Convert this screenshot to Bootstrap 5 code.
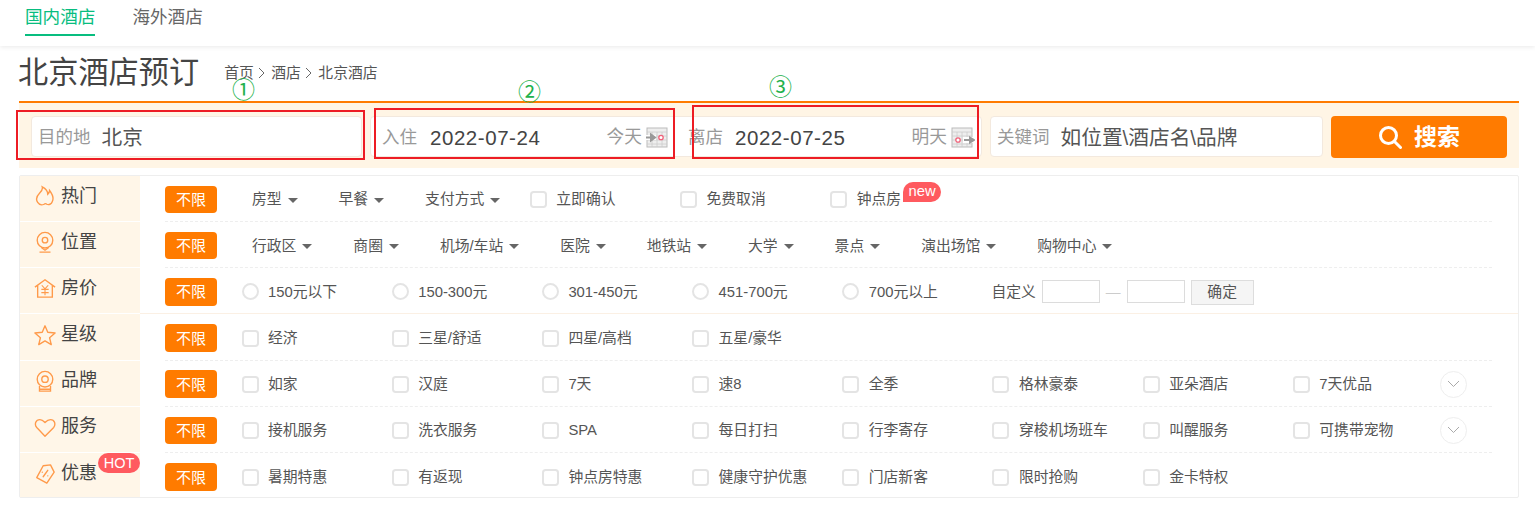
<!DOCTYPE html>
<html lang="zh-CN">
<head>
<meta charset="utf-8">
<title>北京酒店预订</title>
<link href="https://cdn.jsdelivr.net/npm/bootstrap@5.3.0/dist/css/bootstrap.min.css" rel="stylesheet">
<style>
html,body{height:524px;overflow:hidden}
body{position:relative;margin:0;background:#fff;color:#555;font-family:"Liberation Sans","Noto Sans CJK SC",sans-serif;font-size:14.8px}
.topbar{height:46px;box-shadow:0 1px 5px rgba(0,0,0,.09);padding-left:25px;gap:37px}
.tabitem{font-size:17.6px;height:36px;line-height:35px;color:#666;text-decoration:none}
.tabitem.on{color:#08bd7f;border-bottom:2px solid #08bd7f}
.wrapbox{margin:0 16px 0 19px}
.headrow{height:57px;border-bottom:2px solid #ff7b00;align-items:flex-start}
.headrow h1{font-size:30.2px;font-weight:400;color:#444;margin:10px 0 0 -1px;line-height:34px}
.crumbs{margin:16px 0 0 25px;color:#555;font-size:14.8px;line-height:22px;gap:4px}
.crumbs svg{margin:0 2.500px 0 0}
.searchbar{height:65px;background:#fff5e5;padding:13px 12px 10px 12px;gap:8px}
.fieldbox{height:41px;background:#fff;border:1px solid #f3e9de;border-radius:4px;padding:1px 6px 0;flex:none}
.f1{width:331px}.f4{width:333px}
.dategroup{width:612px;padding:1px 0 0}
.datecell{width:305px;height:100%;padding-left:11px}
.datecell.first{padding-right:8px}
.datecell.second{padding-right:6px;padding-left:12px}
.flabel{font-size:17.5px;color:#999;margin-right:11px;white-space:nowrap}
.fval{font-size:20.7px;color:#555;margin-top:2px}
.fdate{font-size:20.5px;color:#444;letter-spacing:.55px;margin-top:2px;margin-left:2px}
.second .fdate{margin-left:1px}
.fhint{font-size:17.7px;color:#999;margin-left:auto;margin-right:4px}
.gobtn{width:177px;height:42px;background:#ff7b00;border:0;border-radius:4px;color:#fff;font-size:23px;font-weight:700;gap:12px;padding:0}
.gobtn:hover{background:#ff7b00;color:#fff}
.panelbox{margin-top:7px;border:1px solid #eee;border-radius:2px;height:323px}
.sidecol{width:120px;flex:none;background:#fff6e8}
.sideitem{height:46.17px;border-bottom:1px solid #fff;font-size:18px;color:#444;padding-left:14px;gap:5px;position:relative;padding-bottom:5px}
.sideitem:last-child{border-bottom:0}
.sideitem svg{width:22px;height:22px;flex:none}
.hotmark{position:absolute;right:0;top:0;height:20px;width:42px;background:#ff5a5f;border-radius:10px;color:#fff;font-size:14.5px;font-weight:400;line-height:20px;padding:0;text-align:center}
.mainfill{flex:1;min-width:0}
.filterrow{height:46.17px;padding-left:25px}
.filterrow.warm{border-bottom:1px solid #fbf0e4}
.filterinner{height:100%;margin-right:26px;border-bottom:1px dashed #eee;padding-top:2px}
.warm .filterinner{border-bottom:0}
.filterrow:last-child .filterinner{border-bottom:0}
.anybtn{width:52px;height:27.5px;background:#ff7b00;border:0;border-radius:4px;color:#fff;font-size:15px;padding:0;line-height:27px;flex:none}
.anybtn:hover{background:#ff7b00;color:#fff}
.droplist{margin-left:35px;gap:40.95px;white-space:nowrap}
.dropname.dropdown-toggle::after{margin-left:6px;border-top:.36em solid #666;border-right:.36em solid transparent;border-left:.36em solid transparent;border-bottom:0;vertical-align:.13em}
.pick{width:150.2px;flex:none;white-space:nowrap;gap:9.5px;margin:0}
.pickset{margin-left:24.5px;flex:none}
.pickset .pick:last-child{width:auto}
.pickset.after-drop{margin-left:29.5px}
.pick input{width:17px;height:17px;margin:0;border:2px solid #e4e4e4;border-radius:1px;flex:none;background-color:#fff}
.pick input[type=radio]{border-radius:50%}
.newmark{position:absolute;left:46.500px;top:-6px;width:38px;height:20px;background:#ff5a5f;border-radius:10px 10px 10px 0;color:#fff;font-size:14.8px;font-weight:400;line-height:19px;padding:0;text-align:center}
.labelwrap{position:relative}
.customset{margin-left:-1px;gap:6px;white-space:nowrap}
.numbox{width:58px;height:23px;min-height:0;border:1px solid #dcdcdc;border-radius:0;padding:0 4px}
.okbtn{width:63px;height:25px;padding:0;border:1px solid #ddd;border-radius:0;background:#f5f5f5;color:#555;font-size:14.8px;line-height:23px;margin-top:2px}
.rangebar{color:#ccc}
.morecircle{width:27px;height:27px;border:1px solid #eee;border-radius:50%;margin-left:auto;margin-right:25px;flex:none}
.redframe{position:absolute;border:2px solid #ed1c24;pointer-events:none}
.r1{left:16px;top:110px;width:349px;height:50px}
.r2{left:374px;top:108px;width:301px;height:51px}
.r3{left:692px;top:105px;width:287px;height:54px}
.circmark{position:absolute;color:#22b14c;font-size:23px;line-height:24px;font-family:"Noto Sans CJK SC",sans-serif}
.c1{left:232px;top:76px}.c2{left:518px;top:78px}.c3{left:769px;top:73px}
</style>
</head>
<body>
<nav class="topbar d-flex align-items-start">
  <a class="tabitem on" href="#">国内酒店</a>
  <a class="tabitem" href="#">海外酒店</a>
</nav>
<div class="wrapbox">
  <div class="headrow d-flex">
    <h1>北京酒店预订</h1>
    <div class="crumbs d-flex align-items-center">
      <span>首页</span><svg width="7" height="12" viewBox="0 0 7 12"><path d="M1 1l5 5-5 5" fill="none" stroke="#666" stroke-width="1"/></svg>
      <span>酒店</span><svg width="7" height="12" viewBox="0 0 7 12"><path d="M1 1l5 5-5 5" fill="none" stroke="#666" stroke-width="1"/></svg>
      <span>北京酒店</span>
    </div>
  </div>
  <form class="searchbar d-flex align-items-start">
    <div class="fieldbox f1 d-flex align-items-center"><span class="flabel">目的地</span><span class="fval">北京</span></div>
    <div class="fieldbox dategroup d-flex">
      <div class="datecell first d-flex align-items-center"><span class="flabel">入住</span><span class="fdate">2022-07-24</span><span class="fhint">今天</span>
        <svg width="22" height="21" viewBox="0 0 22 21"><rect x="1" y="1" width="20" height="19" fill="#eee" stroke="#bbb"/><path d="M1 5h20M1 9h20M1 13h20M1 17h20M6 5v15M11 5v15M16 5v15" stroke="#ccc" stroke-width=".8"/><rect x="0" y="8" width="10" height="5" fill="#fff"/><path d="M0 10.500h8M5 7.500l4 3-4 3z" stroke="#999" stroke-width="2" fill="#999"/><circle cx="15" cy="10.500" r="2.200" fill="#fff" stroke="#f0627a" stroke-width="1.300"/></svg>
      </div>
      <div class="datecell second d-flex align-items-center"><span class="flabel">离店</span><span class="fdate">2022-07-25</span><span class="fhint">明天</span>
        <svg width="24" height="21" viewBox="0 0 24 21"><rect x="1" y="1" width="20" height="19" fill="#eee" stroke="#bbb"/><path d="M1 5h20M1 9h20M1 13h20M1 17h20M6 5v15M11 5v15M16 5v15" stroke="#ccc" stroke-width=".8"/><rect x="12" y="10" width="12" height="6" fill="#fff"/><path d="M13 13h7M19 10.500l4 2.500-4 2.500z" stroke="#999" stroke-width="2" fill="#999"/><circle cx="7" cy="13" r="2.200" fill="#fff" stroke="#f0627a" stroke-width="1.300"/></svg>
      </div>
    </div>
    <div class="fieldbox f4 d-flex align-items-center"><span class="flabel">关键词</span><span class="fval">如位置\酒店名\品牌</span></div>
    <button type="button" class="btn gobtn d-flex align-items-center justify-content-center">
      <svg width="24" height="24" viewBox="0 0 24 24"><circle cx="10.500" cy="10.500" r="8" fill="none" stroke="#fff" stroke-width="3"/><path d="M16.500 16.500l6 6" stroke="#fff" stroke-width="3" stroke-linecap="round"/></svg>搜索</button>
  </form>
  <div class="panelbox d-flex">
    <div class="sidecol">
      <div class="sideitem d-flex align-items-center"><svg viewBox="0 0 24 24" fill="none" stroke="#ff9a4a" stroke-width="1.500"><path d="M9 2c1 3-1 5-3 7-3 3-4 7-2 10 2 3 5 3 7 2 1-1 2-1 3 0 2 1 5 0 6-3 2-4 0-8-3-12 0 2-1 3-2 4 0-3-2-6-6-8z"/></svg><span>热门</span></div>
      <div class="sideitem d-flex align-items-center"><svg viewBox="0 0 24 24" fill="none" stroke="#ff9a4a" stroke-width="1.500"><circle cx="12" cy="10" r="8.500"/><circle cx="12" cy="10" r="3"/><path d="M8 18l4 3 4-3M6 23h12"/></svg><span>位置</span></div>
      <div class="sideitem d-flex align-items-center"><svg viewBox="0 0 24 24" fill="none" stroke="#ff9a4a" stroke-width="1.500"><path d="M1 11l11-8 11 8M4 9v13h16V9"/><path d="M8.500 9l3.500 4 3.500-4M8 13.500h8M8 17h8M12 13v7" stroke-width="1.200"/></svg><span>房价</span></div>
      <div class="sideitem d-flex align-items-center"><svg viewBox="0 0 24 24" fill="none" stroke="#ff9a4a" stroke-width="1.500"><path d="M12 2l3 7 8 .8-6 5.200 1.800 7.500L12 18.500 5.200 22.500 7 15 1 9.800 9 9z" stroke-linejoin="round"/></svg><span>星级</span></div>
      <div class="sideitem d-flex align-items-center"><svg viewBox="0 0 24 24" fill="none" stroke="#ff9a4a" stroke-width="1.500"><circle cx="12" cy="10" r="8.500"/><circle cx="12" cy="10" r="3.500"/><path d="M6 17.500V23h12v-5.500M6 21h12"/></svg><span>品牌</span></div>
      <div class="sideitem d-flex align-items-center"><svg viewBox="0 0 24 24" fill="none" stroke="#ff9a4a" stroke-width="1.500"><path d="M12 22L3 12.500C0 9 2 4 6.500 4c2.500 0 4 1.500 5.500 3 2-2 4-3 6-3 4.500 0 6 5 3.500 8.500z" stroke-linejoin="round"/></svg><span>服务</span></div>
      <div class="sideitem d-flex align-items-center"><svg viewBox="0 0 24 24" fill="none" stroke="#ff9a4a" stroke-width="1.500"><path d="M10 3l8-1 4 8-8 12-11-6z" stroke-linejoin="round"/><path d="M15 8l-5 7M9 10h.1M15 14h.1" stroke-linecap="round"/></svg><span>优惠</span><span class="badge hotmark">HOT</span></div>
    </div>
    <div class="mainfill">
      <div class="filterrow"><div class="filterinner d-flex align-items-center">
        <button type="button" class="btn anybtn">不限</button>
        <div class="droplist d-flex"><span class="dropname dropdown-toggle">房型</span><span class="dropname dropdown-toggle">早餐</span><span class="dropname dropdown-toggle">支付方式</span></div>
        <div class="pickset after-drop d-flex">
          <label class="pick d-flex align-items-center"><input type="checkbox" class="form-check-input"><span>立即确认</span></label>
          <label class="pick d-flex align-items-center"><input type="checkbox" class="form-check-input"><span>免费取消</span></label>
          <label class="pick d-flex align-items-center"><input type="checkbox" class="form-check-input"><span class="labelwrap">钟点房<span class="badge newmark">new</span></span></label>
        </div>
      </div></div>
      <div class="filterrow"><div class="filterinner d-flex align-items-center">
        <button type="button" class="btn anybtn">不限</button>
        <div class="droplist d-flex"><span class="dropname dropdown-toggle">行政区</span><span class="dropname dropdown-toggle">商圈</span><span class="dropname dropdown-toggle">机场/车站</span><span class="dropname dropdown-toggle">医院</span><span class="dropname dropdown-toggle">地铁站</span><span class="dropname dropdown-toggle">大学</span><span class="dropname dropdown-toggle">景点</span><span class="dropname dropdown-toggle">演出场馆</span><span class="dropname dropdown-toggle">购物中心</span></div>
      </div></div>
      <div class="filterrow warm"><div class="filterinner d-flex align-items-center">
        <button type="button" class="btn anybtn">不限</button>
        <div class="pickset d-flex">
          <label class="pick d-flex align-items-center"><input type="radio" name="price" class="form-check-input"><span>150元以下</span></label>
          <label class="pick d-flex align-items-center"><input type="radio" name="price" class="form-check-input"><span>150-300元</span></label>
          <label class="pick d-flex align-items-center"><input type="radio" name="price" class="form-check-input"><span>301-450元</span></label>
          <label class="pick d-flex align-items-center"><input type="radio" name="price" class="form-check-input"><span>451-700元</span></label>
          <label class="pick d-flex align-items-center"><input type="radio" name="price" class="form-check-input"><span>700元以上</span></label>
          <div class="customset d-flex align-items-center"><span>自定义</span><input class="form-control numbox" type="text"><span class="rangebar">—</span><input class="form-control numbox" type="text"><button type="button" class="btn okbtn">确定</button></div>
        </div>
      </div></div>
      <div class="filterrow"><div class="filterinner d-flex align-items-center">
        <button type="button" class="btn anybtn">不限</button>
        <div class="pickset d-flex">
          <label class="pick d-flex align-items-center"><input type="checkbox" class="form-check-input"><span>经济</span></label>
          <label class="pick d-flex align-items-center"><input type="checkbox" class="form-check-input"><span>三星/舒适</span></label>
          <label class="pick d-flex align-items-center"><input type="checkbox" class="form-check-input"><span>四星/高档</span></label>
          <label class="pick d-flex align-items-center"><input type="checkbox" class="form-check-input"><span>五星/豪华</span></label>
        </div>
      </div></div>
      <div class="filterrow"><div class="filterinner d-flex align-items-center">
        <button type="button" class="btn anybtn">不限</button>
        <div class="pickset d-flex">
          <label class="pick d-flex align-items-center"><input type="checkbox" class="form-check-input"><span>如家</span></label>
          <label class="pick d-flex align-items-center"><input type="checkbox" class="form-check-input"><span>汉庭</span></label>
          <label class="pick d-flex align-items-center"><input type="checkbox" class="form-check-input"><span>7天</span></label>
          <label class="pick d-flex align-items-center"><input type="checkbox" class="form-check-input"><span>速8</span></label>
          <label class="pick d-flex align-items-center"><input type="checkbox" class="form-check-input"><span>全季</span></label>
          <label class="pick d-flex align-items-center"><input type="checkbox" class="form-check-input"><span>格林豪泰</span></label>
          <label class="pick d-flex align-items-center"><input type="checkbox" class="form-check-input"><span>亚朵酒店</span></label>
          <label class="pick d-flex align-items-center"><input type="checkbox" class="form-check-input"><span>7天优品</span></label>
        </div>
        <span class="morecircle d-flex align-items-center justify-content-center"><svg width="13" height="8" viewBox="0 0 13 8"><path d="M1 1l5.500 5.500L12 1" fill="none" stroke="#aaa"/></svg></span>
      </div></div>
      <div class="filterrow"><div class="filterinner d-flex align-items-center">
        <button type="button" class="btn anybtn">不限</button>
        <div class="pickset d-flex">
          <label class="pick d-flex align-items-center"><input type="checkbox" class="form-check-input"><span>接机服务</span></label>
          <label class="pick d-flex align-items-center"><input type="checkbox" class="form-check-input"><span>洗衣服务</span></label>
          <label class="pick d-flex align-items-center"><input type="checkbox" class="form-check-input"><span>SPA</span></label>
          <label class="pick d-flex align-items-center"><input type="checkbox" class="form-check-input"><span>每日打扫</span></label>
          <label class="pick d-flex align-items-center"><input type="checkbox" class="form-check-input"><span>行李寄存</span></label>
          <label class="pick d-flex align-items-center"><input type="checkbox" class="form-check-input"><span>穿梭机场班车</span></label>
          <label class="pick d-flex align-items-center"><input type="checkbox" class="form-check-input"><span>叫醒服务</span></label>
          <label class="pick d-flex align-items-center"><input type="checkbox" class="form-check-input"><span>可携带宠物</span></label>
        </div>
        <span class="morecircle d-flex align-items-center justify-content-center"><svg width="13" height="8" viewBox="0 0 13 8"><path d="M1 1l5.500 5.500L12 1" fill="none" stroke="#aaa"/></svg></span>
      </div></div>
      <div class="filterrow"><div class="filterinner d-flex align-items-center">
        <button type="button" class="btn anybtn">不限</button>
        <div class="pickset d-flex">
          <label class="pick d-flex align-items-center"><input type="checkbox" class="form-check-input"><span>暑期特惠</span></label>
          <label class="pick d-flex align-items-center"><input type="checkbox" class="form-check-input"><span>有返现</span></label>
          <label class="pick d-flex align-items-center"><input type="checkbox" class="form-check-input"><span>钟点房特惠</span></label>
          <label class="pick d-flex align-items-center"><input type="checkbox" class="form-check-input"><span>健康守护优惠</span></label>
          <label class="pick d-flex align-items-center"><input type="checkbox" class="form-check-input"><span>门店新客</span></label>
          <label class="pick d-flex align-items-center"><input type="checkbox" class="form-check-input"><span>限时抢购</span></label>
          <label class="pick d-flex align-items-center"><input type="checkbox" class="form-check-input"><span>金卡特权</span></label>
        </div>
      </div></div>
    </div>
  </div>
</div>
<div class="redframe r1"></div>
<div class="redframe r2"></div>
<div class="redframe r3"></div>
<span class="circmark c1">①</span>
<span class="circmark c2">②</span>
<span class="circmark c3">③</span>
<script src="https://cdn.jsdelivr.net/npm/bootstrap@5.3.0/dist/js/bootstrap.bundle.min.js"></script>
</body>
</html>
